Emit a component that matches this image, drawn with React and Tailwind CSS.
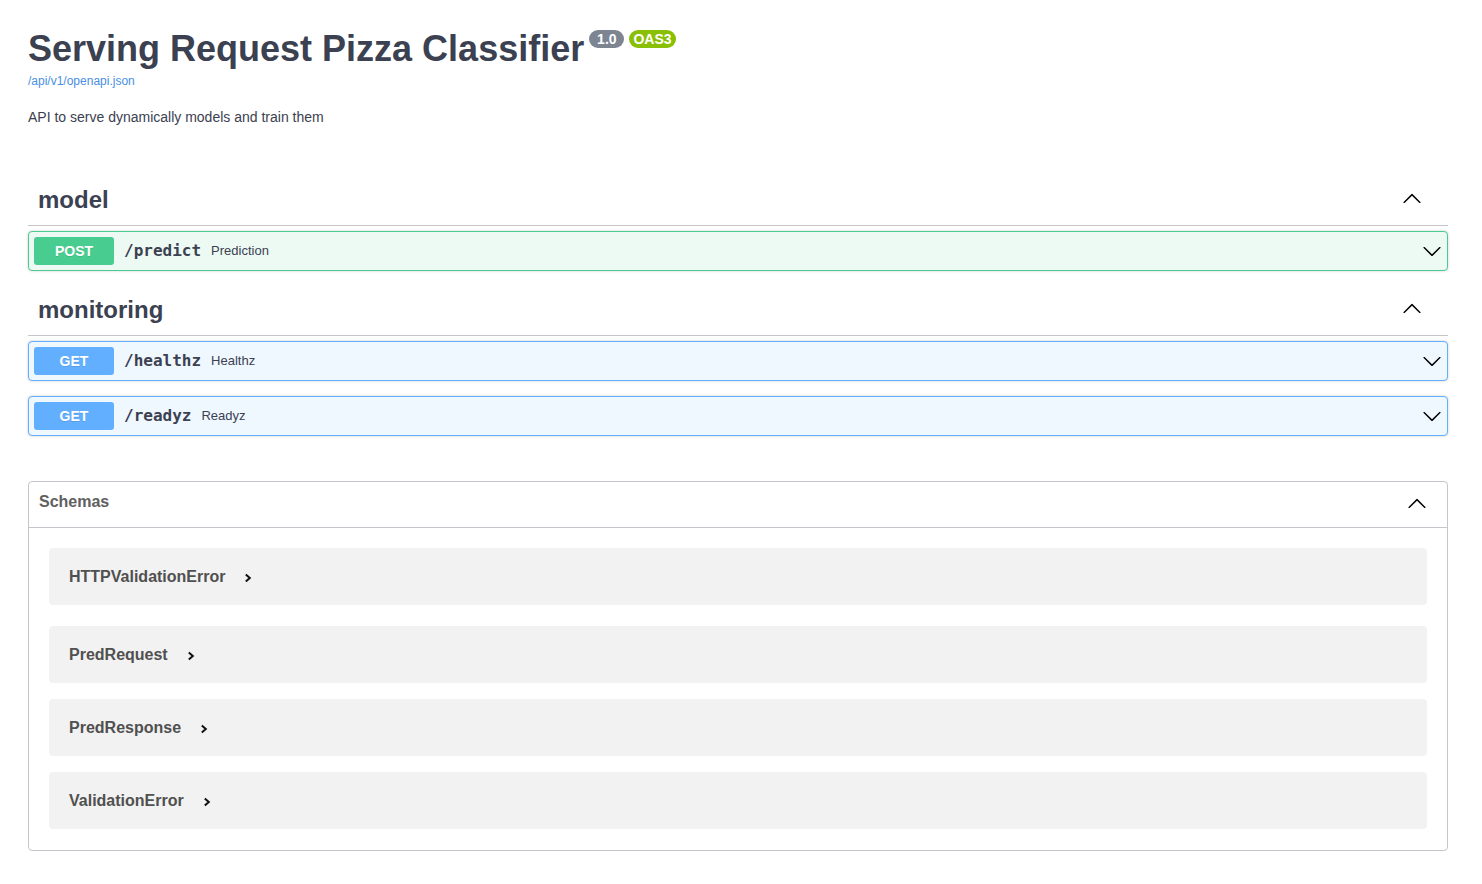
import React from "react";

function ArrowUp({ className = "" }) {
  return (
    <svg width="20" height="20" viewBox="0 0 20 20" className={className} fill="#000">
      <path d="M17.418 14.908c.272.268.709.268.979 0s.271-.701 0-.969l-7.908-7.83a.697.697 0 0 0-.979 0l-7.908 7.83c-.27.268-.27.701 0 .969.271.268.709.268.979 0L10 7.767l7.418 7.141z" />
    </svg>
  );
}

function ArrowDown({ className = "" }) {
  return (
    <svg width="20" height="20" viewBox="0 0 20 20" className={className} fill="#000">
      <path d="M17.418 6.109c.272-.268.709-.268.979 0s.271.701 0 .969l-7.908 7.83c-.27.268-.707.268-.979 0l-7.908-7.83c-.27-.268-.27-.701 0-.969.271-.268.709-.268.979 0L10 13.25l7.418-7.141z" />
    </svg>
  );
}

function SmallRight() {
  return (
    <svg width="8" height="10" viewBox="0 0 8 10" className="shrink-0">
      <polyline points="1.8,1.5 5.8,5 1.8,8.5" fill="none" stroke="#111" strokeWidth="2" />
    </svg>
  );
}

function TagHeader({ name }) {
  return (
    <div className="h-[50px] border-b border-[#c4c6cb] flex items-center justify-between pl-[10px] pr-[26px] mb-[5px]">
      <span className="text-[24px] font-bold text-[#3b4151] mb-[2px]">{name}</span>
      <ArrowUp className="mb-[6px]" />
    </div>
  );
}

function Op({ method, path, desc }) {
  const isPost = method === "POST";
  return (
    <div
      className={
        "h-[40px] mb-[15px] rounded-[4px] border flex items-center px-[5px] shadow-[0_0_3px_rgba(0,0,0,0.19)] " +
        (isPost ? "bg-[#edfaf4] border-[#49cc90]" : "bg-[#eff7ff] border-[#61affe]")
      }
    >
      <div
        className={
          "w-[80px] h-[28px] rounded-[3px] flex items-center justify-center text-white text-[14px] font-bold [text-shadow:0_1px_0_rgba(0,0,0,0.1)] " +
          (isPost ? "bg-[#49cc90]" : "bg-[#61affe]")
        }
      >
        {method}
      </div>
      <span className="px-[10px] font-['DejaVu_Sans_Mono',monospace] font-bold text-[16px] text-[#3b4151]">
        {path}
      </span>
      <span className="text-[13px] text-[#3b4151] flex-1">{desc}</span>
      <ArrowDown />
    </div>
  );
}

function Schema({ name, mb }) {
  return (
    <div className={"h-[57px] mx-[20px] rounded-[4px] bg-[#f2f2f2] flex items-center pl-[20px] " + mb}>
      <span className="text-[16px] leading-[20px] font-bold text-[#505050]">{name}</span>
      <span className="ml-[19px] mt-[2px] flex">
        <SmallRight />
      </span>
    </div>
  );
}

export default function App() {
  return (
    <div className="min-h-[884px] bg-white font-['Liberation_Sans',Arial,sans-serif] text-[#3b4151]">
      <div className="ml-[28px] w-[1420px] pt-[29px] pb-[30px]">
        <div className="flex items-start">
          <h2 className="text-[36px] leading-[40px] font-bold text-[#3b4151]">Serving Request Pizza Classifier</h2>
          <span className="ml-[5px] mt-[1px] rounded-full bg-[#7d8492] px-[4px] py-[2px] text-[14px] leading-[14px] font-bold text-white whitespace-pre">
            {" 1.0 "}
          </span>
          <span className="ml-[5px] mt-[1px] rounded-full bg-[#89bf04] px-[4px] py-[2px] text-[14px] leading-[14px] font-bold text-white">
            OAS3
          </span>
        </div>
        <div className="mt-[5px] text-[12px] leading-[14px] text-[#4990e2]">/api/v1/openapi.json</div>
        <p className="mt-[21px] text-[14px] leading-[17px] text-[#3b4151]">API to serve dynamically models and train them</p>

        <div className="mt-[50px] flex flex-col">
          <TagHeader name="model" />
          <Op method="POST" path="/predict" desc="Prediction" />
          <TagHeader name="monitoring" />
          <Op method="GET" path="/healthz" desc="Healthz" />
          <Op method="GET" path="/readyz" desc="Readyz" />
        </div>

        <section className="mt-[30px] border border-[#c4c6cb] rounded-[4px]">
          <div className="h-[46px] border-b border-[#c4c6cb] flex items-start justify-between pl-[10px] pr-[20px] pt-[10px]">
            <span className="text-[16px] leading-[20px] font-bold text-[#606060]">Schemas</span>
            <ArrowUp className="mt-[1px]" />
          </div>
          <div className="pt-[20px]">
            <Schema name="HTTPValidationError" mb="mb-[21px]" />
            <Schema name="PredRequest" mb="mb-[16px]" />
            <Schema name="PredResponse" mb="mb-[16px]" />
            <Schema name="ValidationError" mb="mb-[21px]" />
          </div>
        </section>
      </div>
    </div>
  );
}
